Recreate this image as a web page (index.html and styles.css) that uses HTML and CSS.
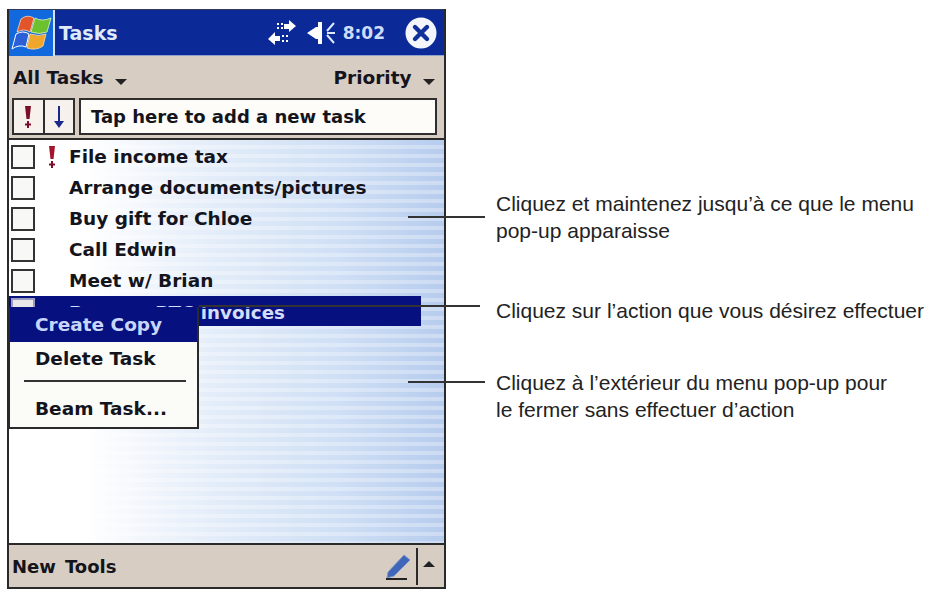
FILE: index.html
```html
<!DOCTYPE html>
<html lang="fr">
<head>
<meta charset="utf-8">
<title>Tasks</title>
<link rel="stylesheet" href="styles.css">
</head>
<body>
<main class="page">
  <section class="device">
    <header class="titlebar">
      <div class="logo-tile">
        <svg class="logo" width="42" height="38" viewBox="0 0 42 38">
          <path d="M11 5 Q17 0 24 4 L20 18 Q14 14 7 18Z" fill="#e2542a" stroke="#ffd9b0" stroke-width=".8"/>
          <path d="M25 4 Q32 8 41 4 L37 18 Q29 21 21 18Z" fill="#6cc22e" stroke="#e3f4c0" stroke-width=".8"/>
          <path d="M6 20 Q13 16 19 20 L16 33 Q9 30 2 35Z" fill="#2a5fd8" stroke="#fff" stroke-width="1"/>
          <path d="M20 20 Q29 23 36 20 L33 32 Q26 37 17 34Z" fill="#f0a62a" stroke="#ffe3a8" stroke-width=".8"/>
        </svg>
      </div>
      <div class="title">Tasks</div>
      <div class="status">
        <svg class="ic-sync" width="28" height="26" viewBox="0 0 28 26">
          <path d="M9 3h2v2H9zM13 3h2v2h-2zM9 7h2v2H9zM13 7h2v2h-2zM16 4h5V0l7 6-7 6V9h-5z" fill="#fff"/>
          <path d="M14 15h2v2h-2zM18 15h2v2h-2zM14 20h2v2h-2zM18 20h2v2h-2zM12 16H7v-4l-7 7 7 6v-4h5z" fill="#fff"/>
        </svg>
        <svg class="ic-vol" width="30" height="26" viewBox="0 0 30 26">
          <path d="M1 13l9-6h2V2h4v22h-4v-5h-2z" fill="#fff"/>
          <path d="M28 3l-7 8M21 13h8M21 15l7 8" stroke="#dfe8ff" stroke-width="2" fill="none"/>
        </svg>
        <span class="clock">8:02</span>
        <svg class="ic-close" width="32" height="32" viewBox="0 0 32 32">
          <circle cx="16" cy="16" r="15.5" fill="#f4f6fc"/>
          <path d="M10 10l12 12M22 10L10 22" stroke="#12309a" stroke-width="4.400" stroke-linecap="round"/>
        </svg>
      </div>
    </header>

    <div class="menubar">
      <div class="menu-label">All Tasks <span class="caret"></span></div>
      <div class="menu-label">Priority <span class="caret"></span></div>
    </div>

    <div class="toolbar">
      <div class="tool-group">
        <div class="tool-btn tool-bang">
          <svg width="10" height="24" viewBox="0 0 10 24"><path d="M2 1h6l-1.500 13h-3z" fill="#7a0f2a"/><path d="M5 16v7M2 19.500h6" stroke="#7a0f2a" stroke-width="2"/></svg>
        </div>
        <div class="tool-btn tool-arrow">
          <svg width="12" height="24" viewBox="0 0 12 24"><path d="M6 1v17" stroke="#1a2a8c" stroke-width="2"/><path d="M1 16h10l-5 7z" fill="#1a2a8c"/></svg>
        </div>
      </div>
      <div class="new-task">Tap here to add a new task</div>
    </div>

    <div class="list">
      <div class="row"><span class="check"></span><span class="prio"><svg width="10" height="24" viewBox="0 0 10 24"><path d="M2 1h6l-1.500 13h-3z" fill="#a3152e"/><path d="M5 16v7M2 19.500h6" stroke="#7a0f2a" stroke-width="2"/></svg></span><span class="task">File income tax</span></div>
      <div class="row"><span class="check"></span><span class="prio"></span><span class="task">Arrange documents/pictures</span></div>
      <div class="row"><span class="check"></span><span class="prio"></span><span class="task">Buy gift for Chloe</span></div>
      <div class="row"><span class="check"></span><span class="prio"></span><span class="task">Call Edwin</span></div>
      <div class="row"><span class="check"></span><span class="prio"></span><span class="task">Meet w/ Brian</span></div>
      <div class="row row-selected"><span class="check"></span><span class="prio"></span><span class="task">Process RTC invoices</span></div>

      <div class="popup">
        <div class="popup-item popup-active">Create Copy</div>
        <div class="popup-item">Delete Task</div>
        <div class="popup-sep"></div>
        <div class="popup-item">Beam Task...</div>
      </div>
    </div>

    <footer class="footbar">
      <div class="foot-menu"><span>New</span><span>Tools</span></div>
      <div class="foot-tools">
        <svg class="ic-pen" width="28" height="30" viewBox="0 0 28 30">
          <path d="M4 21L20 4l6 5L10 25l-7 2z" fill="#3f66b8" stroke="#7d96cc" stroke-width="1"/>
          <path d="M2 28h21" stroke="#222" stroke-width="2"/>
        </svg>
        <span class="foot-sep"></span>
        <span class="caret-up"></span>
      </div>
    </footer>

    <span class="leader leader-a"></span>
    <span class="leader leader-b"></span>
    <span class="leader leader-c"></span>
  </section>

  <aside class="notes">
    <p class="note note-a">Cliquez et maintenez jusqu’à ce que le menu<br>pop-up apparaisse</p>
    <p class="note note-b">Cliquez sur l’action que vous désirez effectuer</p>
    <p class="note note-c">Cliquez à l’extérieur du menu pop-up pour<br>le fermer sans effectuer d’action</p>
  </aside>
</main>
</body>
</html>
```
FILE: styles.css
```css
html, body { margin: 0; padding: 0; background: #fff; }
body { width: 929px; height: 595px; overflow: hidden; }
.page { display: flex; align-items: flex-start; padding: 9px 0 0 7px; }

.device {
  position: relative;
  width: 439px;
  height: 580px;
  box-sizing: border-box;
  display: flex;
  flex-direction: column;
  border: solid #2a2a2a;
  border-width: 0 2px 2px 2px;
  font-family: "DejaVu Sans", sans-serif;
  font-weight: 700;
  color: #14141c;
  flex: none;
}

.titlebar {
  display: flex;
  align-items: center;
  height: 47px;
  background: #0b2a98;
  border-top: 1px solid #333a5c;
  border-bottom: 1px solid #8fa2cc;
  box-sizing: border-box;
  flex: none;
}
.logo-tile {
  width: 46px;
  height: 46px;
  background: #1269de;
  border-right: 2px solid #d5e4fb;
  box-sizing: border-box;
  display: flex;
  align-items: center;
  justify-content: center;
}
.title { color: #dfeafc; font-size: 19px; margin-left: 4px; flex: 1; }
.status { display: flex; align-items: center; padding-right: 7px; }
.ic-sync { margin-right: 10px; }
.ic-vol { margin-right: 7px; }
.clock { color: #cfdcfa; font-size: 17px; margin-right: 20px; }

.menubar {
  display: flex;
  justify-content: space-between;
  height: 42px;
  align-items: center;
  padding: 0 9px 0 4px;
  background: #d8cdc3;
  font-size: 18.500px;
  flex: none;
}
.caret {
  display: inline-block;
  border: 6px solid transparent;
  border-top: 6px solid #222;
  border-bottom: 0;
  margin-left: 5px;
  vertical-align: -1px;
}

.toolbar {
  display: flex;
  gap: 4px;
  height: 37px;
  padding: 0 7px 3px 3px;
  background: #d8cdc3;
  border-bottom: 2px solid #2a2a2a;
  flex: none;
}
.tool-group {
  display: flex;
  border: 2px solid #2e2e2e;
  background: #f6f1ec;
  width: 63px;
  box-sizing: border-box;
}
.tool-btn { flex: 1; display: flex; align-items: center; justify-content: center; }
.tool-bang { border-right: 2px solid #2e2e2e; }
.new-task {
  flex: 1;
  background: #fdfcf8;
  border: 2px solid #2e2e2e;
  font-size: 18px;
  display: flex;
  align-items: center;
  padding-left: 10px;
  box-sizing: border-box;
}

.list {
  position: relative;
  flex: 1;
  padding-top: 1px;
  background:
    repeating-linear-gradient(180deg, rgba(255,255,255,0) 0 5px, rgba(255,255,255,.3) 5px 9px),
    linear-gradient(90deg, #fff 0, #fff 75px, #e4edf9 200px, #cfdff5 330px, #b6ccee 437px);
}
.row { display: flex; align-items: center; height: 31px; padding-left: 2px; font-size: 18.500px; }
.check {
  width: 24px;
  height: 24px;
  border: 2px solid #333;
  background: #f8f8f6;
  box-sizing: border-box;
  flex: none;
}
.prio { width: 34px; display: flex; justify-content: center; box-sizing: border-box; flex: none; }
.task { white-space: nowrap; }
.row-selected { background: #06107f; width: 410px; height: 30px; color: #d4ddfa; font-size: 18.300px; }
.row-selected .task { padding-top: 3px; }
.row-selected .check { background: #e8e8e8; border-color: #9c9cc0; align-self: flex-start; margin-top: 2px; }

.popup {
  position: absolute;
  left: -1px;
  top: 167px;
  width: 191px;
  height: 122px;
  box-sizing: border-box;
  border: 2px solid #2a2a2a;
  border-top: 0;
  background: #fbfbf8;
  font-size: 18.500px;
}
.popup-item { height: 32px; display: flex; align-items: center; padding-left: 25px; }
.popup-active { height: 35px; background: #06107f; color: #c8d6fb; }
.popup-sep { height: 2px; background: #333; margin: 6px 11px 10px 14px; }

.footbar {
  display: flex;
  align-items: center;
  justify-content: space-between;
  height: 44px;
  background: #d8cdc3;
  border-top: 2px solid #2a2a2a;
  box-sizing: border-box;
  padding: 0 9px 0 3px;
  font-size: 18px;
  flex: none;
}
.foot-menu { display: flex; gap: 9px; }
.foot-tools { display: flex; align-items: center; }
.foot-sep { width: 2px; height: 37px; background: #2a2a2a; margin: 0 5px 0 4px; }
.caret-up { border: 6.500px solid transparent; border-bottom: 6.500px solid #222; border-top: 0; margin-bottom: 5px; }

.leader { position: absolute; height: 2px; background: #333; }
.leader-a { left: 399px; top: 207px; width: 77px; }
.leader-b { left: 190px; top: 296px; width: 281px; }
.leader-c { left: 399px; top: 372px; width: 77px; }

.notes { display: flex; flex-direction: column; margin-left: 50px; padding-top: 181px; font-family: "Liberation Sans", Arial, sans-serif; color: #222; font-size: 21px; line-height: 27px; }
.note { margin: 0; white-space: nowrap; }
.note-b { margin-top: 53px; }
.note-c { margin-top: 45px; }
```
